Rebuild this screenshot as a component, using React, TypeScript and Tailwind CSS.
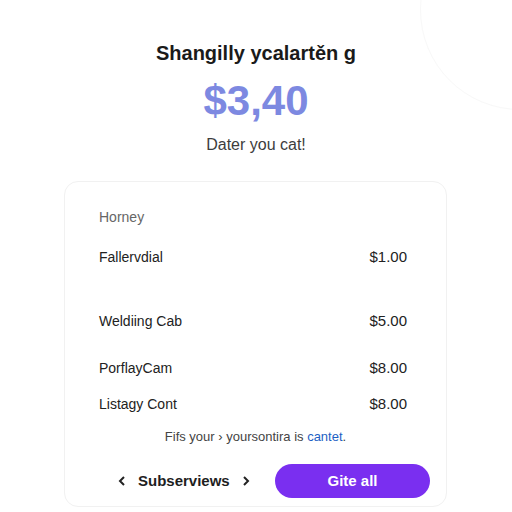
import React from "react";

const rows = [
  { name: "Fallervdial", price: "$1.00", mt: "mt-[22px]" },
  { name: "Weldiing Cab", price: "$5.00", mt: "mt-[46px]" },
  { name: "PorflayCam", price: "$8.00", mt: "mt-[29px]" },
  { name: "Listagy Cont", price: "$8.00", mt: "mt-[18px]" },
];

export default function App() {
  return (
    <div
      className="relative w-[512px] h-[512px] overflow-hidden bg-white"
      style={{ fontFamily: "'Liberation Sans', Arial, sans-serif" }}
    >
      <div className="absolute left-[420px] top-[-90px] w-[200px] h-[200px] rounded-full border border-[#f8f8f8]" />
      <div className="flex flex-col items-center pt-[40px]">
        <h1 className="text-[20px] leading-[26px] font-semibold text-[#1a1a1a]">
          Shangilly ycalartěn g
        </h1>
        <div className="mt-[12px] text-[42px] leading-[46px] font-bold text-[#7d89e1]">
          $3,40
        </div>
        <div className="mt-[11px] text-[16px] leading-[20px] text-[#3d3d3d]">Dater you cat!</div>
      </div>
      <div className="absolute left-[64px] top-[181px] w-[383px] h-[326px] rounded-[14px] border border-[#f1f1f1] bg-white flex flex-col">
        <div className="pl-[34px] pr-[39px] pt-[26px]">
          <div className="text-[14px] leading-[18px] text-[#666]">Horney</div>
          {rows.map((r) => (
            <div key={r.name} className={`flex justify-between text-[14px] leading-[18px] text-[#222] ${r.mt}`}>
              <span>{r.name}</span>
              <span className="text-[15px]">{r.price}</span>
            </div>
          ))}
        </div>
        <div className="mt-[16px] text-center text-[13px] leading-[16px] text-[#444]">
          Fifs your › yoursontira is <span className="text-[#1d5fc4]">cantet</span>.
        </div>
        <div className="mt-[19px] flex items-center pl-[53px] pr-[16px]">
          <div className="flex items-center gap-[12px] text-[15px] font-semibold text-[#1e1e1e]">
            <svg width="8" height="10" viewBox="0 0 8 10"><path d="M6 1L2 5l4 4" stroke="#222" strokeWidth="2" fill="none" /></svg>
            <span>Subserviews</span>
            <svg width="8" height="10" viewBox="0 0 8 10"><path d="M2 1l4 4-4 4" stroke="#222" strokeWidth="2" fill="none" /></svg>
          </div>
          <button className="ml-auto w-[155px] h-[34px] rounded-full bg-[#7a2ff0] text-white text-[15px] font-semibold">
            Gite all
          </button>
        </div>
      </div>
    </div>
  );
}
